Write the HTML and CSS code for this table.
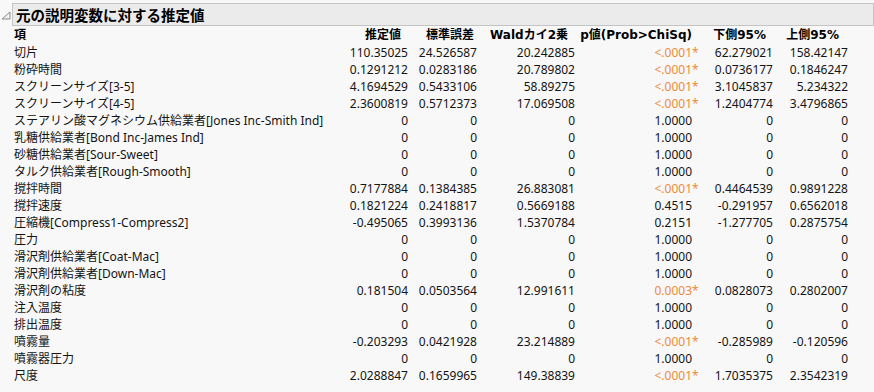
FILE: index.html
```html
<!DOCTYPE html>
<html lang="ja">
<head>
<meta charset="utf-8">
<link rel="stylesheet" href="styles.css">
</head>
<body>
<div class="report">
  <div class="title-row">
    <svg class="disclosure" width="10" height="9" viewBox="0 0 10 9"><polygon points="1,8 9,1 9,8" fill="#f4f4f4" stroke="#8a8a8a" stroke-width="1"/></svg>
    <div class="title-box">元の説明変数に対する推定値</div>
  </div>
  <table class="est">
    <colgroup>
      <col class="c-name"><col class="c1"><col class="c2"><col class="c3"><col class="c4"><col class="c5"><col class="c6">
    </colgroup>
    <thead>
      <tr>
        <th class="name">項</th>
        <th class="h1">推定値</th>
        <th class="h2">標準誤差</th>
        <th class="h3">Waldカイ2乗</th>
        <th class="h4">p値(Prob&gt;ChiSq)</th>
        <th class="h5">下側95%</th>
        <th class="h6">上側95%</th>
      </tr>
    </thead>
    <tbody>
      <tr><td class="name">切片</td><td>110.35025</td><td>24.526587</td><td>20.242885</td><td class="p sig">&lt;.0001<span class="star">*</span></td><td>62.279021</td><td class="last">158.42147</td></tr>
      <tr><td class="name">粉砕時間</td><td>0.1291212</td><td>0.0283186</td><td>20.789802</td><td class="p sig">&lt;.0001<span class="star">*</span></td><td>0.0736177</td><td class="last">0.1846247</td></tr>
      <tr><td class="name">スクリーンサイズ[3-5]</td><td>4.1694529</td><td>0.5433106</td><td>58.89275</td><td class="p sig">&lt;.0001<span class="star">*</span></td><td>3.1045837</td><td class="last">5.234322</td></tr>
      <tr><td class="name">スクリーンサイズ[4-5]</td><td>2.3600819</td><td>0.5712373</td><td>17.069508</td><td class="p sig">&lt;.0001<span class="star">*</span></td><td>1.2404774</td><td class="last">3.4796865</td></tr>
      <tr><td class="name">ステアリン酸マグネシウム供給業者[Jones Inc-Smith Ind]</td><td>0</td><td>0</td><td>0</td><td class="p">1.0000<span class="star"></span></td><td>0</td><td class="last">0</td></tr>
      <tr><td class="name">乳糖供給業者[Bond Inc-James Ind]</td><td>0</td><td>0</td><td>0</td><td class="p">1.0000<span class="star"></span></td><td>0</td><td class="last">0</td></tr>
      <tr><td class="name">砂糖供給業者[Sour-Sweet]</td><td>0</td><td>0</td><td>0</td><td class="p">1.0000<span class="star"></span></td><td>0</td><td class="last">0</td></tr>
      <tr><td class="name">タルク供給業者[Rough-Smooth]</td><td>0</td><td>0</td><td>0</td><td class="p">1.0000<span class="star"></span></td><td>0</td><td class="last">0</td></tr>
      <tr><td class="name">撹拌時間</td><td>0.7177884</td><td>0.1384385</td><td>26.883081</td><td class="p sig">&lt;.0001<span class="star">*</span></td><td>0.4464539</td><td class="last">0.9891228</td></tr>
      <tr><td class="name">撹拌速度</td><td>0.1821224</td><td>0.2418817</td><td>0.5669188</td><td class="p">0.4515<span class="star"></span></td><td>-0.291957</td><td class="last">0.6562018</td></tr>
      <tr><td class="name">圧縮機[Compress1-Compress2]</td><td>-0.495065</td><td>0.3993136</td><td>1.5370784</td><td class="p">0.2151<span class="star"></span></td><td>-1.277705</td><td class="last">0.2875754</td></tr>
      <tr><td class="name">圧力</td><td>0</td><td>0</td><td>0</td><td class="p">1.0000<span class="star"></span></td><td>0</td><td class="last">0</td></tr>
      <tr><td class="name">滑沢剤供給業者[Coat-Mac]</td><td>0</td><td>0</td><td>0</td><td class="p">1.0000<span class="star"></span></td><td>0</td><td class="last">0</td></tr>
      <tr><td class="name">滑沢剤供給業者[Down-Mac]</td><td>0</td><td>0</td><td>0</td><td class="p">1.0000<span class="star"></span></td><td>0</td><td class="last">0</td></tr>
      <tr><td class="name">滑沢剤の粘度</td><td>0.181504</td><td>0.0503564</td><td>12.991611</td><td class="p sig">0.0003<span class="star">*</span></td><td>0.0828073</td><td class="last">0.2802007</td></tr>
      <tr><td class="name">注入温度</td><td>0</td><td>0</td><td>0</td><td class="p">1.0000<span class="star"></span></td><td>0</td><td class="last">0</td></tr>
      <tr><td class="name">排出温度</td><td>0</td><td>0</td><td>0</td><td class="p">1.0000<span class="star"></span></td><td>0</td><td class="last">0</td></tr>
      <tr><td class="name">噴霧量</td><td>-0.203293</td><td>0.0421928</td><td>23.214889</td><td class="p sig">&lt;.0001<span class="star">*</span></td><td>-0.285989</td><td class="last">-0.120596</td></tr>
      <tr><td class="name">噴霧器圧力</td><td>0</td><td>0</td><td>0</td><td class="p">1.0000<span class="star"></span></td><td>0</td><td class="last">0</td></tr>
      <tr><td class="name">尺度</td><td>2.0288847</td><td>0.1659965</td><td>149.38839</td><td class="p sig">&lt;.0001<span class="star">*</span></td><td>1.7035375</td><td class="last">2.3542319</td></tr>
    </tbody>
  </table>
</div>
</body>
</html>
```

FILE: styles.css
```css
html, body {
  margin: 0;
  padding: 0;
  background: #f8f8f8;
}
body {
  font-family: "Noto Sans", "Noto Sans CJK JP", sans-serif;
  font-size: 12px;
  color: #141414;
}
.report {
  width: 874px;
}
.title-row {
  display: flex;
  align-items: flex-start;
  padding-top: 3px;
}
.disclosure {
  display: block;
  margin: 8px 1px 0 1px;
}
.title-box {
  width: 857px;
  height: 21px;
  border: 1px solid #c4c4c4;
  background: #ebebeb;
  font-family: "Noto Sans CJK JP", sans-serif;
  font-size: 14.5px;
  font-weight: 700;
  line-height: 21px;
  padding-left: 3px;
  box-sizing: content-box;
  color: #000;
}
.est {
  border-collapse: collapse;
  table-layout: fixed;
  margin-left: 14px;
  width: 834px;
}
.c-name { width: 316px; }
.c1 { width: 78px; }
.c2 { width: 69px; }
.c3 { width: 98px; }
.c4 { width: 124px; }
.c5 { width: 74px; }
.c6 { width: 75px; }
.est th, .est td {
  padding: 0;
  text-align: right;
  white-space: nowrap;
  overflow: visible;
}
.est th {
  height: 18px;
  line-height: 18px;
  font-family: "DejaVu Sans", "Noto Sans CJK JP", sans-serif;
  font-weight: 700;
  color: #000;
}
.est td {
  height: 17px;
  line-height: 17px;
}
.est .name {
  text-align: left;
}
.h1 { padding-right: 7px !important; }
.h2 { padding-right: 3px !important; }
.h3 { padding-right: 7px !important; }
.h4 { padding-right: 7px !important; }
.h5 { padding-right: 7px !important; }
.h6 { padding-right: 9px !important; }
.est td.p {
  text-align: right;
}
.star {
  display: inline-block;
  width: 7px;
  text-align: left;
}
.sig {
  color: #ee8a3a;
}
```
